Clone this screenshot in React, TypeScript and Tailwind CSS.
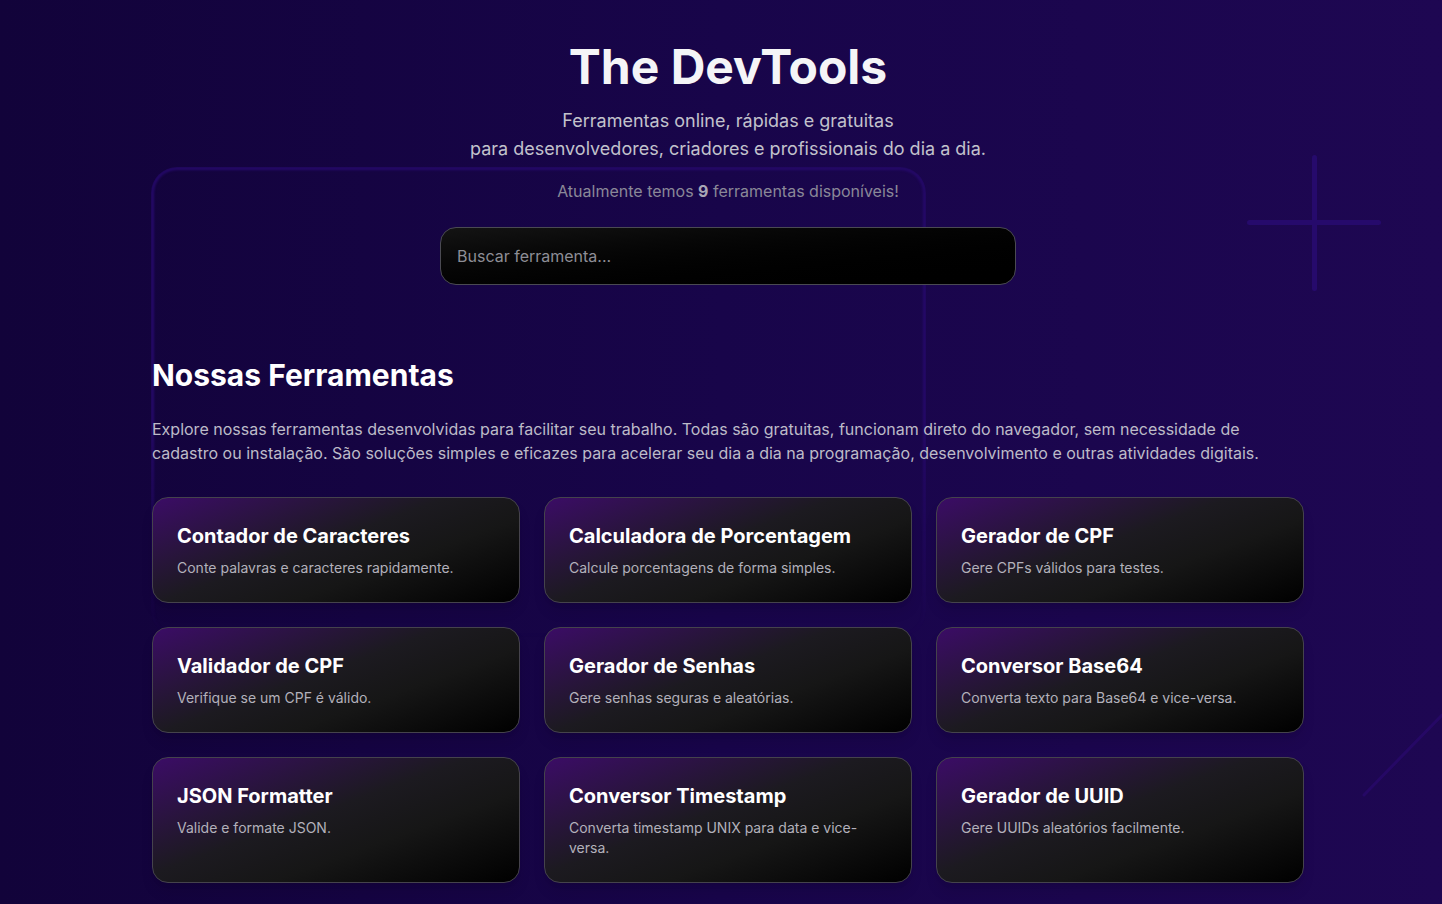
const TOOLS = [
    { id: 1, title: 'Contador de Caracteres', desc: 'Conte palavras e caracteres rapidamente.' },
    { id: 2, title: 'Calculadora de Porcentagem', desc: 'Calcule porcentagens de forma simples.' },
    { id: 3, title: 'Gerador de CPF', desc: 'Gere CPFs válidos para testes.' },
    { id: 4, title: 'Validador de CPF', desc: 'Verifique se um CPF é válido.' },
    { id: 5, title: 'Gerador de Senhas', desc: 'Gere senhas seguras e aleatórias.' },
    { id: 6, title: 'Conversor Base64', desc: 'Converta texto para Base64 e vice-versa.' },
    { id: 7, title: 'JSON Formatter', desc: 'Valide e formate JSON.' },
    { id: 8, title: 'Conversor Timestamp', desc: 'Converta timestamp UNIX para data e vice-versa.' },
    { id: 9, title: 'Gerador de UUID', desc: 'Gere UUIDs aleatórios facilmente.' },
]

function Decor() {
    return (
        <div className="pointer-events-none absolute inset-0 overflow-hidden">
            {/* big rounded frame behind the hero */}
            <div className="absolute left-[151px] top-[167px] h-[470px] w-[775px] rounded-[26px] border-[3px] border-[#25096a] blur-[1px] [mask-image:linear-gradient(to_bottom,black_55%,transparent)]" />
            {/* plus */}
            <div className="absolute left-[1312px] top-[155px] h-[136px] w-[5px] rounded-full bg-[#260a6c] blur-[0.5px]" />
            <div className="absolute left-[1247px] top-[220px] h-[5px] w-[134px] rounded-full bg-[#260a6c] blur-[0.5px]" />
            {/* diagonal */}
            <svg className="absolute bottom-0 right-0" width="90" height="200" viewBox="0 0 90 200">
                <line x1="12" y1="88" x2="90" y2="8" stroke="#28096a" strokeWidth="3" strokeLinecap="round" opacity="0.8" />
            </svg>
        </div>
    )
}

export default function App() {
    return (
        <div className="relative min-h-[904px] overflow-hidden bg-gradient-to-r from-[#12033a] via-[#18054a] to-[#1e0752] pl-[14px] font-['Inter',sans-serif] text-white">
            <Decor />
            <div className="relative mx-auto max-w-6xl pb-6 pt-[43px]">
                <div className="flex flex-col items-center text-center">
                    <h1 className="text-5xl font-bold leading-none text-[#f5f5f7]">The DevTools</h1>
                    <p className="mt-4 text-lg leading-7 text-[#c2c2cc]">
                        Ferramentas online, rápidas e gratuitas
                        <br />
                        para desenvolvedores, criadores e profissionais do dia a dia.
                    </p>
                    <p className="mt-4 text-base leading-6 text-[#8a8898]">
                        Atualmente temos <span className="font-bold text-[#a9a7b6]">9</span> ferramentas disponíveis!
                    </p>
                    <input
                        type="text"
                        placeholder="Buscar ferramenta..."
                        className="mt-6 h-[58px] w-full max-w-[576px] rounded-2xl border border-[#4a4a52] bg-gradient-to-br from-[#141414] to-[#000000] px-4 text-base text-white outline-none placeholder:text-[#8e8e96]"
                    />
                </div>

                <h2 className="mt-[72px] text-3xl font-bold text-white">Nossas Ferramentas</h2>
                <p className="mt-6 text-base leading-6 text-[#bdbbc8]">
                    Explore nossas ferramentas desenvolvidas para facilitar seu trabalho. Todas são gratuitas, funcionam direto do navegador, sem necessidade de
                    cadastro ou instalação. São soluções simples e eficazes para acelerar seu dia a dia na programação, desenvolvimento e outras atividades digitais.
                </p>

                <div className="mt-8 grid grid-cols-3 gap-6">
                    {TOOLS.map((tool) => (
                        <div
                            key={tool.id}
                            className="rounded-2xl border border-[#45434c] bg-[linear-gradient(160deg,#3b0c66_0%,#1c1a20_45%,#161616_65%,#000000_100%)] p-6 shadow-lg">
                            <h3 className="text-xl font-bold leading-7 text-white">{tool.title}</h3>
                            <p className="mt-2 text-sm leading-5 text-[#b3b1bb]">{tool.desc}</p>
                        </div>
                    ))}
                </div>
            </div>
        </div>
    )
}
